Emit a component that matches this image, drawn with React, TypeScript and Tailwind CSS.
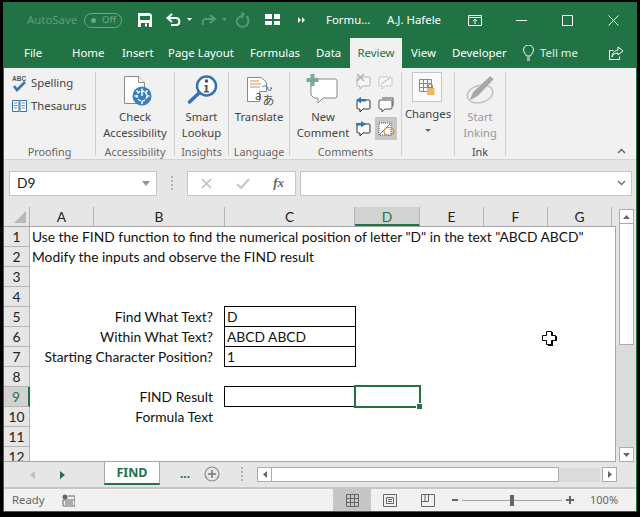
const UI_FONT = "font-['Noto_Sans',sans-serif]";

const rowLabels = ['1', '2', '3', '4', '5', '6', '7', '8', '9', '10', '11', '12'];
const colLabels = [
  { name: 'A', w: 'w-[64px]' },
  { name: 'B', w: 'w-[131px]' },
  { name: 'C', w: 'w-[130px]' },
  { name: 'D', w: 'w-[65px]' },
  { name: 'E', w: 'w-[64px]' },
  { name: 'F', w: 'w-[64px]' },
  { name: 'G', w: 'w-[64px]' },
];

const TitleIcons = () => (
  <svg width="180" height="24" viewBox="0 0 180 24" className="shrink-0">
    {/* save */}
    <path d="M4 5h12l2 2v12H4z" fill="#fff" />
    <path d="M6 8h10v4H6z" fill="#217346" />
    <path d="M7 15h8v4H7z" fill="#217346" />
    <path d="M11 15.500h2v3h-2z" fill="#fff" />
    {/* undo */}
    <path d="M38 6l-4.500 4 4.500 4" fill="none" stroke="#fff" strokeWidth="2" />
    <path d="M34 10h8c4.500 0 4.500 7 0 7h-5" fill="none" stroke="#fff" strokeWidth="2" />
    <path d="M53 10h5l-2.500 3z" fill="#fff" />
    {/* redo */}
    <path d="M76 7l5 4-5 4" fill="none" stroke="#559a76" strokeWidth="2" />
    <path d="M80 11h-8c-3 0-4 3-3 6" fill="none" stroke="#559a76" strokeWidth="2" />
    <path d="M88 10h5l-2.500 3z" fill="#559a76" />
    {/* repeat */}
    <path d="M108 8c-4 1-6 4-5 7 2 5 9 5 11 0 1-3 0-5-1-7" fill="none" stroke="#559a76" strokeWidth="2" />
    <path d="M107 4l1 8 3-7z" fill="#559a76" />
    {/* grid */}
    <path d="M131 6h7v5h-7zM140 6h6v5h-6zM131 13h7v4h-7zM140 13h6v4h-6z" fill="#fff" />
    {/* more */}
    <path d="M164 9l3 3-3 3zM168 9l3 3-3 3z" fill="#fff" />
  </svg>
);

const SmallComment = ({ color = '#555', dashed = false }: { color?: string; dashed?: boolean }) => (
  <path
    d="M3 4h11a1 1 0 0 1 1 1v7a1 1 0 0 1-1 1H8l-3 3v-3H3a1 1 0 0 1-1-1V5a1 1 0 0 1 1-1z"
    fill="#fff"
    stroke={color}
    strokeDasharray={dashed ? '2 1' : undefined}
  />
);

const RibbonGroup = ({ width, label, children, muted }: { width: string; label: string; children: React.ReactNode; muted?: boolean }) => (
  <div className={`${width} shrink-0 flex flex-col border-r border-[#cfcfcf] h-[84px] mt-[4px]`}>
    <div className="flex-1 min-h-0">{children}</div>
    <div className={`h-[16px] -mb-[4px] text-center text-[10.8px] leading-[16px] ${muted ? 'text-[#444]' : 'text-[#666]'}`}>{label}</div>
  </div>
);

const BigLabel = ({ lines, gray }: { lines: string[]; gray?: boolean }) => (
  <div className={`text-center text-[11.3px] leading-[16px] whitespace-nowrap ${gray ? 'text-[#9a9a9a]' : 'text-[#444]'}`}>
    {lines.map((l) => (
      <div key={l}>{l}</div>
    ))}
  </div>
);

const Ribbon = () => (
  <div className="h-[92px] shrink-0 bg-[#f1f1f1] border-b border-[#d4d4d4] flex text-[#444]">
    <RibbonGroup width="w-[92px]" label="Proofing">
      <div className="flex items-center h-[22px] pl-[7px] gap-[3px] text-[11.3px]">
        <svg width="17" height="18" viewBox="0 0 17 18">
          <text x="1" y="7" fontSize="6.500" fontWeight="700" fill="#555" fontFamily="Liberation Sans">ABC</text>
          <path d="M3 12l3 4 8-8" fill="none" stroke="#2f75b5" strokeWidth="2.500" />
        </svg>
        <span>Spelling</span>
      </div>
      <div className="flex items-center h-[22px] mt-[1px] pl-[7px] gap-[3px] text-[11.3px]">
        <svg width="17" height="14" viewBox="0 0 17 14">
          <path d="M1.500 1.500h6.500v11H1.500zM9 1.500h6.500v11H9z" fill="#fff" stroke="#2f75b5" />
          <path d="M3 4h3.500M3 6.500h3.500M3 9h3.500M10.500 4H14M10.500 6.500H14M10.500 9H14" stroke="#888" />
        </svg>
        <span>Thesaurus</span>
      </div>
    </RibbonGroup>
    <RibbonGroup width="w-[79px]" label="Accessibility">
      <div className="flex flex-col items-center">
        <svg width="34" height="32" viewBox="0 0 34 32" className="mt-[2px] mb-[3px]">
          <path d="M6.500 2.500h14l6 6v21h-20z" fill="#fff" stroke="#8a8a8a" />
          <path d="M20.500 2.500v6h6" fill="#fff" stroke="#8a8a8a" />
          <circle cx="24" cy="22" r="9.500" fill="#3a7fbf" />
          <circle cx="24" cy="22" r="5" fill="none" stroke="#fff" strokeWidth="1.500" strokeDasharray="3 1.500" />
          <path d="M24 14.500V22M16.500 22h3M28.500 22h3M24 27v3M18.500 16.500l2.500 2.500M29.500 16.500L27 19" stroke="#fff" strokeWidth="1.500" />
        </svg>
        <BigLabel lines={['Check', 'Accessibility']} />
      </div>
    </RibbonGroup>
    <RibbonGroup width="w-[54px]" label="Insights">
      <div className="flex flex-col items-center">
        <svg width="32" height="30" viewBox="0 0 32 30" className="mt-[3px] mb-[4px]">
          <circle cx="20.500" cy="11" r="9.500" fill="#fff" stroke="#2f75b5" strokeWidth="2.500" />
          <path d="M13 18L3.500 27" stroke="#2f75b5" strokeWidth="3.500" strokeLinecap="round" />
          <circle cx="20.500" cy="6" r="1.800" fill="#555" />
          <path d="M18.500 10h3v6H23v1.500h-5V16h1.500v-4.500h-1z" fill="#555" />
        </svg>
        <BigLabel lines={['Smart', 'Lookup']} />
      </div>
    </RibbonGroup>
    <RibbonGroup width="w-[61px]" label="Language">
      <div className="flex flex-col items-center">
        <svg width="34" height="32" viewBox="0 0 34 32" className="mt-[3px] mb-[2px]">
          <path d="M5.500 2.500h14l5 5v9h-7v10h-12z" fill="#fff" stroke="#8a8a8a" />
          <path d="M8 6h9M8 9h11" stroke="#e69138" />
          <path d="M8 12h10" stroke="#999" />
          <path d="M20 12c2-1.500 5-1.500 6 1l-1 0 2.500 3 2.500-3h-2" fill="none" stroke="#2f75b5" />
          <text x="13" y="25" fontSize="12" fill="#555" fontFamily="Noto Sans">a</text>
          <text x="20.500" y="30" fontSize="12" fill="#555" fontFamily="Noto Sans CJK JP">あ</text>
        </svg>
        <BigLabel lines={['Translate']} />
      </div>
    </RibbonGroup>
    <RibbonGroup width="w-[112px]" label="Comments">
      <div className="flex">
        <div className="w-[66px] flex flex-col items-center">
          <svg width="34" height="32" viewBox="0 0 34 32" className="mt-[2px] mb-[3px]">
            <path d="M5 5h24a2 2 0 0 1 2 2v15a2 2 0 0 1-2 2H17l-5 5v-5H8l-3-3V7z" fill="#fff" stroke="#8a8a8a" />
            <path d="M4.500 0h4v4h4v4h-4v4h-4V8h-4V4h4z" fill="#7fa996" />
          </svg>
          <BigLabel lines={['New', 'Comment']} />
        </div>
        <div className="grid grid-cols-[22px_22px] grid-rows-[22px_24px_23px] -mt-[1px] -ml-[3px]">
          <svg width="18" height="18" viewBox="0 0 18 18" className="self-center justify-self-center opacity-40">
            <SmallComment />
            <path d="M2 1l7 7M9 1L2 8" stroke="#555" strokeWidth="1.500" />
          </svg>
          <svg width="18" height="18" viewBox="0 0 18 18" className="self-center justify-self-center opacity-40">
            <SmallComment dashed />
            <path d="M4 11l9-6" stroke="#555" />
          </svg>
          <svg width="18" height="18" viewBox="0 0 18 18" className="self-center justify-self-center">
            <SmallComment color="#333" />
            <path d="M1 4l5-3v2h5v2.500H6v2z" fill="#2f75b5" />
          </svg>
          <svg width="18" height="18" viewBox="0 0 18 18" className="self-center justify-self-center">
            <path d="M5 2h11v8" fill="none" stroke="#555" />
            <SmallComment />
          </svg>
          <svg width="18" height="18" viewBox="0 0 18 18" className="self-center justify-self-center">
            <SmallComment color="#333" />
            <path d="M11 4L6 1v2H1v2.500h5v2z" fill="#2f75b5" />
          </svg>
          <div className="bg-[#c6c6c6] flex items-center justify-center">
            <svg width="18" height="18" viewBox="0 0 18 18">
              <path d="M2 3h12v12H2z" fill="#fff" stroke="#555" strokeDasharray="1 1" />
              <path d="M2 15L13 4" stroke="#777" />
              <ellipse cx="12" cy="11.500" rx="5" ry="4" fill="none" stroke="#d08a3e" strokeWidth="1.200" />
            </svg>
          </div>
        </div>
      </div>
    </RibbonGroup>
    <RibbonGroup width="w-[53px]" label="">
      <div className="flex flex-col items-center">
        <div className="w-[30px] h-[30px] mr-[2px] bg-[#fafafa] border border-[#c6c6c6] flex items-center justify-center">
          <svg width="16" height="17" viewBox="0 0 16 17">
            <path d="M.500.500h12v12H.500zM4.500.500v12M8.500.500v12M.500 4.500h12M.500 8.500h12" fill="none" stroke="#888" />
            <rect x="8" y="9" width="7.500" height="7" fill="#f2b75f" />
            <path d="M9.500 9V7a2 2 0 0 1 4 0v2" fill="none" stroke="#888" />
          </svg>
        </div>
        <div className="text-[11.3px] leading-[16px] mt-[4px]">Changes</div>
        <svg width="6" height="3" viewBox="0 0 6 3" className="mt-[7px]">
          <path d="M0 0h6L3 3z" fill="#666" />
        </svg>
      </div>
    </RibbonGroup>
    <RibbonGroup width="w-[51px]" label="Ink" muted>
      <div className="flex flex-col items-center">
        <svg width="32" height="32" viewBox="0 0 32 32" className="mt-[2px] mb-[3px]">
          <ellipse cx="16" cy="20" rx="13" ry="8.500" fill="none" stroke="#c2c2c2" strokeWidth="1.500" transform="rotate(-15 16 20)" />
          <path d="M26 2l4 3-16 17-9 5 4-9z" fill="#a6a6a6" stroke="#f1f1f1" strokeWidth="0.500" />
        </svg>
        <BigLabel lines={['Start', 'Inking']} gray />
      </div>
    </RibbonGroup>
    <div className="flex-1 flex items-end justify-end pr-[10px] pb-[5px]">
      <svg width="9" height="6" viewBox="0 0 9 6">
        <path d="M1 5l3.500-3.500L8 5" fill="none" stroke="#666" strokeWidth="1.500" />
      </svg>
    </div>
  </div>
);

const FormulaBar = () => (
  <div className="h-[47px] shrink-0 bg-[#e6e6e6] flex items-center pl-[5px] pr-[4px] pt-[1px]">
    <div className="w-[148px] h-[25px] bg-white border border-[#c6c6c6] flex items-center justify-between pl-[7px] pr-[6px] font-['Lato',sans-serif] text-[13.8px] text-[#222] -mt-[2px]">
      <span>D9</span>
      <svg width="8" height="5" viewBox="0 0 8 5">
        <path d="M0 0h8L4 5z" fill="#8a9a92" />
      </svg>
    </div>
    <div className="w-[30px] flex flex-col items-center gap-[2px] -mt-[2px]">
      <div className="w-[2px] h-[2px] bg-[#b5b5b5]" />
      <div className="w-[2px] h-[2px] bg-[#b5b5b5]" />
      <div className="w-[2px] h-[2px] bg-[#b5b5b5]" />
      <div className="w-[2px] h-[2px] bg-[#b5b5b5]" />
    </div>
    <div className="w-[109px] h-[25px] bg-white border border-[#c6c6c6] flex items-center justify-between pl-[13px] pr-[11px] -mt-[2px]">
      <svg width="11" height="11" viewBox="0 0 11 11">
        <path d="M1 1l9 9M10 1l-9 9" stroke="#bdbdbd" strokeWidth="1.500" />
      </svg>
      <svg width="14" height="11" viewBox="0 0 14 11">
        <path d="M1 6l4 4 8-9" fill="none" stroke="#c6c6c6" strokeWidth="2" />
      </svg>
      <span className="font-['Liberation_Serif',serif] italic font-bold text-[13px] text-[#666]">fx</span>
    </div>
    <div className="flex-1 h-[25px] ml-[4px] bg-white border border-[#c6c6c6] flex items-center justify-end pr-[5px] -mt-[2px]">
      <svg width="9" height="6" viewBox="0 0 9 6">
        <path d="M1 1l3.500 3.500L8 1" fill="none" stroke="#777" strokeWidth="1.500" />
      </svg>
    </div>
  </div>
);

const labels: Record<string, string> = {
  '5': 'Find What Text?',
  '6': 'Within What Text?',
  '7': 'Starting Character Position?',
  '9': 'FIND Result',
  '10': 'Formula Text',
};
const values: Record<string, string> = { '5': 'D', '6': 'ABCD ABCD', '7': '1', '9': '' };
const intro: Record<string, string> = {
  '1': 'Use the FIND function to find the numerical position of letter "D" in the text "ABCD ABCD"',
  '2': 'Modify the inputs and observe the FIND result',
};

const ValueCell = ({ row }: { row: string }) => {
  // rows 5 and 9 start a box, so their top border sits on the line above
  const opensBox = row === '5' || row === '9';
  return (
    <div
      className={`w-[132px] shrink-0 border-x border-b border-black pl-[2px] leading-[19px] whitespace-nowrap ${opensBox ? 'h-[21px] -mt-px border-t' : 'h-[20px]'}`}
    >
      {values[row]}
    </div>
  );
};

const Sheet = () => (
  <div className="flex-1 min-h-0 flex bg-[#e6e6e6]">
    <div className="w-[612px] shrink-0 flex flex-col font-['Lato',sans-serif] text-[13.8px] text-[#111]">
      <div className="h-[20px] shrink-0 flex border-b border-[#a6a6a6]">
        <div className="w-[26px] shrink-0 flex items-end justify-end pr-[3px] pb-[3px] border-r border-[#b5b5b5]">
          <svg width="12" height="12" viewBox="0 0 12 12">
            <path d="M12 0v12H0z" fill="#b8b8b8" />
          </svg>
        </div>
        {colLabels.map((c) => (
          <div
            key={c.name}
            className={`${c.w} shrink-0 text-center leading-[19px] border-r border-[#b5b5b5] ${c.name === 'D' ? 'bg-[#d2d2d2] border-b-2 border-b-[#217346] text-[#217346]' : 'text-[#222]'}`}
          >
            {c.name}
          </div>
        ))}
      </div>
      <div className="flex-1 min-h-0 overflow-hidden relative border-r border-b border-[#a6a6a6]">
        {rowLabels.map((r) => (
          <div key={r} className="h-[20px] flex">
            <div
              className={`w-[26px] shrink-0 text-center leading-[19px] border-b border-b-[#b5b5b5] border-r ${r === '9' ? 'bg-[#d2d2d2] border-r-2 border-r-[#217346] text-[#217346]' : 'bg-[#e6e6e6] border-r-[#b5b5b5] text-[#222]'}`}
            >
              {r}
            </div>
            <div className="flex-1 min-w-0 bg-white flex">
              {intro[r] ? (
                <div className="pl-[2px] leading-[20px] whitespace-nowrap">{intro[r]}</div>
              ) : (
                <>
                  <div className="w-[64px] shrink-0" />
                  <div className="w-[130px] shrink-0 flex justify-end pr-[11px] leading-[20px] whitespace-nowrap">{labels[r]}</div>
                  {r in values && <ValueCell row={r} />}
                  {r === '9' && (
                    <div className="relative w-[65px] h-[20px]">
                      <div className="absolute -left-[2px] -top-[2px] w-[67px] h-[23px] border-2 border-[#217346]" />
                      <div className="absolute left-[61px] top-[17px] w-[5px] h-[5px] bg-[#217346] outline outline-white" />
                    </div>
                  )}
                </>
              )}
            </div>
          </div>
        ))}
        {/* mouse pointer over the sheet */}
        <svg width="17" height="17" viewBox="0 0 17 17" className="absolute left-[537px] top-[103px]">
          <path d="M7 2h5v4h4v5h-4v5H7v-5H3V6h4z" fill="#000" />
          <path d="M5.500 1.500h5v4h4v5h-4v4h-5v-4h-4v-5h4z" fill="#fff" stroke="#000" />
        </svg>
      </div>
    </div>
    <div className="w-[20px] shrink-0 pt-[2px] flex flex-col items-center pl-[1px]">
      <div className="w-[15px] h-[15px] shrink-0 bg-white border border-[#ababab] flex items-center justify-center">
        <svg width="7" height="4" viewBox="0 0 7 4">
          <path d="M0 4h7L3.500 0z" fill="#666" />
        </svg>
      </div>
      <div className="w-[15px] h-[121px] shrink-0 bg-white border border-t-0 border-[#ababab]" />
      <div className="flex-1 w-[20px] -ml-[1px] bg-[#dadbdb]" />
      <div className="w-[15px] h-[15px] shrink-0 bg-white border border-[#ababab] flex items-center justify-center">
        <svg width="7" height="4" viewBox="0 0 7 4">
          <path d="M0 0h7L3.500 4z" fill="#666" />
        </svg>
      </div>
    </div>
  </div>
);

const SheetTabs = () => (
  <div className="h-[27px] shrink-0 bg-[#e6e6e6] border-b-2 border-b-[#c6c6c6] flex">
    <div className="w-[100px] shrink-0 flex items-center pl-[26px] gap-[25px]">
      <svg width="5" height="8" viewBox="0 0 5 8">
        <path d="M5 0v8L0 4z" fill="#bdbdbd" />
      </svg>
      <svg width="5" height="8" viewBox="0 0 5 8">
        <path d="M0 0v8l5-4z" fill="#217346" />
      </svg>
    </div>
    <div className="w-[56px] h-[24px] -mt-px bg-white border-x border-[#a6a6a6] border-b-2 border-b-[#217346] text-center font-['Noto_Sans',sans-serif] font-bold text-[12.5px] leading-[23px] text-[#217346]">
      FIND
    </div>
    <div className="w-[50px] text-center font-bold text-[#217346] text-[12px] leading-[24px]">...</div>
    <div className="w-[19px] flex items-center justify-center -ml-[8px] mb-[2px]">
      <svg width="16" height="16" viewBox="0 0 16 16">
        <circle cx="8" cy="8" r="7" fill="none" stroke="#8a8a8a" strokeWidth="1.200" />
        <path d="M8 4v8M4 8h8" stroke="#777" strokeWidth="1.500" />
      </svg>
    </div>
    <div className="w-[25px] flex flex-col items-center justify-center gap-[2px] mb-[2px] ml-[8px]">
      <div className="w-[2px] h-[2px] bg-[#b5b5b5]" />
      <div className="w-[2px] h-[2px] bg-[#b5b5b5]" />
      <div className="w-[2px] h-[2px] bg-[#b5b5b5]" />
      <div className="w-[2px] h-[2px] bg-[#b5b5b5]" />
    </div>
    <div className="flex-1 flex items-center h-[25px] pr-[19px] pl-[3px]">
      <div className="w-[15px] h-[15px] bg-white border border-[#ababab] flex items-center justify-center">
        <svg width="4" height="7" viewBox="0 0 4 7">
          <path d="M4 0v7L0 3.500z" fill="#666" />
        </svg>
      </div>
      <div className="w-[287px] h-[15px] bg-white border border-l-0 border-[#ababab]" />
      <div className="flex-1 h-[14px] bg-[#dadbdb]" />
      <div className="w-[15px] h-[15px] ml-[2px] bg-white border border-[#ababab] flex items-center justify-center">
        <svg width="4" height="7" viewBox="0 0 4 7">
          <path d="M0 0v7l4-3.500z" fill="#666" />
        </svg>
      </div>
    </div>
  </div>
);

const StatusBar = () => (
  <div className="h-[22px] shrink-0 bg-[#f1f1f1] flex items-center text-[11.3px] text-[#666]">
    <span className="ml-[8px] w-[50px]">Ready</span>
    <svg width="13" height="13" viewBox="0 0 13 13">
      <circle cx="3" cy="3" r="2.500" fill="#666" />
      <path d="M6 2h7v10H1V6h12M3 8h8M3 10h8" fill="none" stroke="#666" />
    </svg>
    <div className="ml-[258px] w-[38px] h-full bg-[#c6c6c6] flex items-center justify-center">
      <svg width="13" height="13" viewBox="0 0 13 13">
        <path d="M.500.500h12v12H.500zM4.500.500v12M8.500.500v12M.500 4.500h12M.500 8.500h12" fill="none" stroke="#666" />
      </svg>
    </div>
    <svg width="14" height="13" viewBox="0 0 14 13" className="ml-[12px]">
      <path d="M.500.500h13v12H.500zM3.500 3.500h7v6h-7zM5 5.500h4M5 7.500h4" fill="none" stroke="#666" />
    </svg>
    <svg width="14" height="13" viewBox="0 0 14 13" className="ml-[24px]">
      <path d="M.500.500h13v12H.500zM.500 7.500h7V.500M4 .500v7" fill="none" stroke="#666" />
    </svg>
    <div className="ml-[17px] w-[6px] h-[2px] bg-[#666]" />
    <div className="ml-[4px] w-[100px] h-[1px] bg-[#a6a6a6] relative">
      <div className="absolute left-[48px] -top-[5px] w-[4px] h-[11px] bg-[#666]" />
    </div>
    <svg width="8" height="8" viewBox="0 0 8 8" className="ml-[4px]">
      <path d="M3 0h2v3h3v2H5v3H3V5H0V3h3z" fill="#666" />
    </svg>
    <span className="ml-[16px] text-[11px]">100%</span>
  </div>
);

export default function App() {
  return (
    <div className="w-[640px] h-[517px] bg-black pt-[2px] pl-[3px] pr-[3px] pb-[5px]">
      <div className={`h-full flex flex-col border-x border-b border-[#217346] overflow-hidden ${UI_FONT}`}>
        <div className="h-[36px] shrink-0 bg-[#217346] flex items-center text-[11.4px] text-white">
          <span className="ml-[23px] w-[50px] whitespace-nowrap text-[#5f9c7c]">AutoSave</span>
          <div className="ml-[7px] w-[38px] h-[15px] rounded-full border border-[#6fa78a] flex items-center pl-[6px] gap-[6px] text-[9.5px] text-[#6fa78a]">
            <div className="w-[5px] h-[5px] rounded-full bg-[#6fa78a]" />
            Off
          </div>
          <div className="ml-[12px] w-[180px]">
            <TitleIcons />
          </div>
          <span className="ml-[12px] w-[61px]">Formu...</span>
          <span className="w-[81px]">A.J. Hafele</span>
          <svg width="14" height="11" viewBox="0 0 14 11">
            <path d="M.500.500h13v10H.500zM.500 2.500h13" fill="none" stroke="#fff" />
            <path d="M7 9V4M5 6l2-2 2 2" fill="none" stroke="#fff" />
          </svg>
          <svg width="11" height="11" viewBox="0 0 11 11" className="ml-[34px]">
            <path d="M0 5.500h11" stroke="#fff" />
          </svg>
          <svg width="11" height="11" viewBox="0 0 11 11" className="ml-[35px]">
            <path d="M.500.500h10v10H.500z" fill="none" stroke="#fff" />
          </svg>
          <svg width="11" height="11" viewBox="0 0 11 11" className="ml-[35px]">
            <path d="M.500.500l10 10M10.500.500l-10 10" stroke="#fff" />
          </svg>
        </div>
        <div className="h-[30px] shrink-0 bg-[#217346] flex items-end text-[11.4px] text-white leading-[30px]">
          <span className="ml-[20px] w-[48px]">File</span>
          <span className="w-[50px]">Home</span>
          <span className="w-[46px]">Insert</span>
          <span className="w-[82px]">Page Layout</span>
          <span className="w-[66px]">Formulas</span>
          <span className="w-[34px]">Data</span>
          <div className="w-[52px] h-[30px] bg-[#f1f1f1] text-[#217346] text-center">Review</div>
          <span className="ml-[9px] w-[41px]">View</span>
          <span className="w-[71px]">Developer</span>
          <svg width="11" height="16" viewBox="0 0 11 16" className="mb-[7px]">
            <path d="M3.500 11C3 9 .500 7.500.500 5a5 5 0 0 1 10 0c0 2.500-2.500 4-3 6zM4 13h3M4 15h3" fill="none" stroke="#fff" />
          </svg>
          <span className="ml-[6px] w-[68px] text-[#e4efe9]">Tell me</span>
          <svg width="16" height="15" viewBox="0 0 16 15" className="mb-[7px]">
            <path d="M5.500 4.500h-4v9h10v-3" fill="none" stroke="#fff" />
            <path d="M10 1l5 4-5 4V7C7 7 5 8 4 11c0-4 2-6 6-7z" fill="none" stroke="#fff" />
          </svg>
        </div>
        <Ribbon />
        <FormulaBar />
        <Sheet />
        <SheetTabs />
        <StatusBar />
      </div>
    </div>
  );
}
